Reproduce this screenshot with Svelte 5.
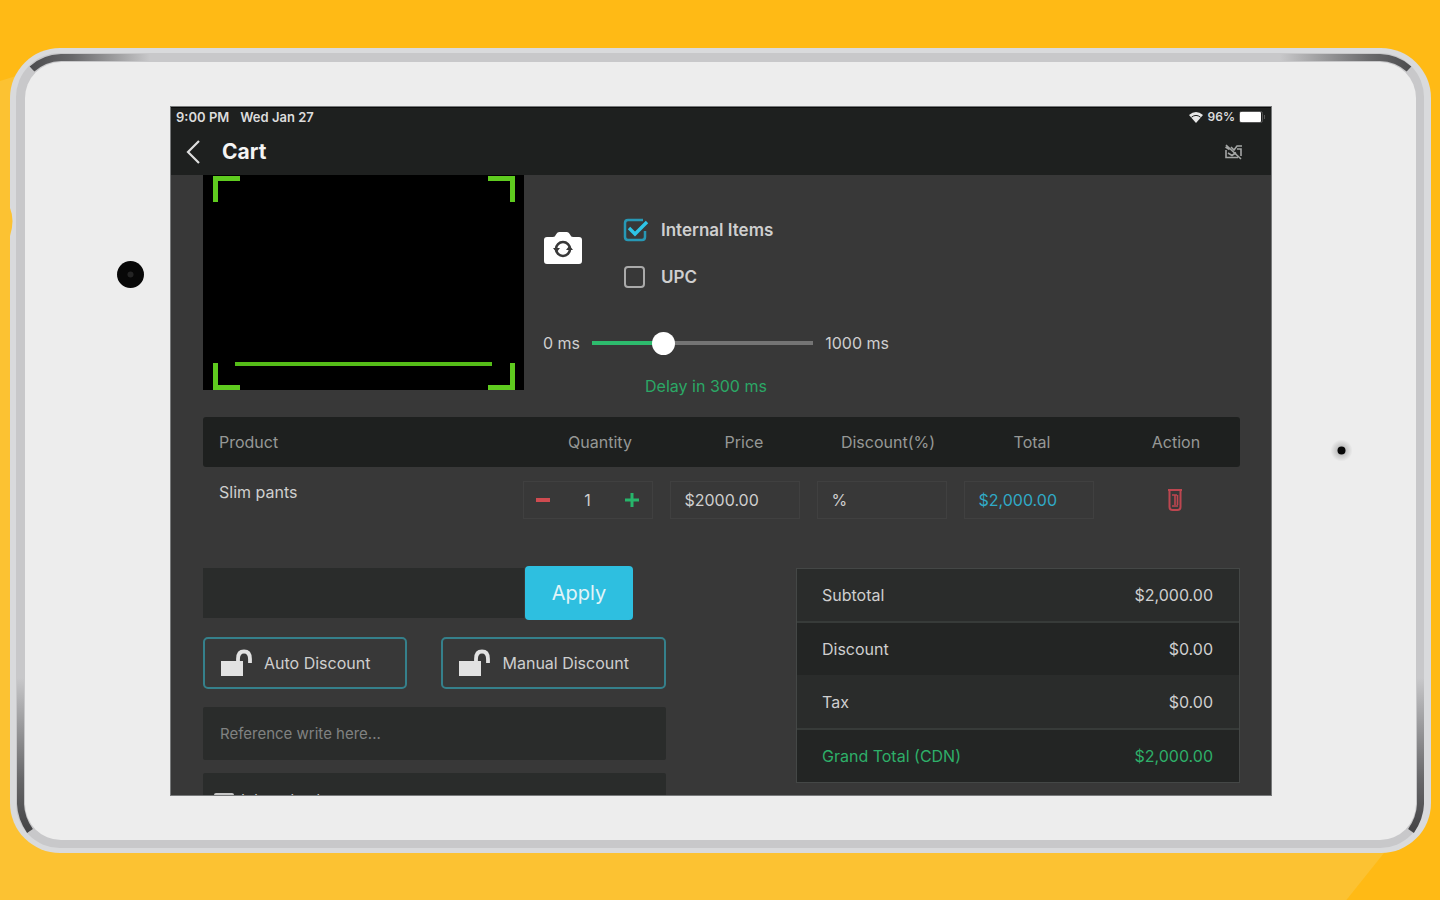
<script>
  let internalItems = $state(true);
  let upc = $state(false);
  let delay = $state(300);
  let quantity = $state(1);
  let price = $state('$2000.00');
  let discount = $state('%');
  let coupon = $state('');
  let reference = $state('');
  const totals = [
    { label: 'Subtotal', value: '$2,000.00' },
    { label: 'Discount', value: '$0.00' },
    { label: 'Tax', value: '$0.00' },
    { label: 'Grand Total (CDN)', value: '$2,000.00' }
  ];
  const headings = ['Product', 'Quantity', 'Price', 'Discount(%)', 'Total', 'Action'];
</script>

{#snippet unlock()}
  <svg class="unlock" viewBox="0 0 32 28" aria-hidden="true">
    <path d="M1 12h22v15H1z" fill="#e2e2e2" />
    <path d="M18 14V10q0-7.500 6-7.500t6 7.500v4" fill="none" stroke="#e2e2e2" stroke-width="3.800" />
  </svg>
{/snippet}

<div class="stage">
  <div class="tablet">
    <svg class="shell" viewBox="0 0 1421 805" preserveAspectRatio="none" aria-hidden="true">
      <defs>
        <linearGradient id="tl" gradientUnits="userSpaceOnUse" x1="20" y1="0" x2="140" y2="0">
          <stop offset="0" stop-color="#4c4c4e" /><stop offset="0.35" stop-color="#68686a" /><stop offset="1" stop-color="#c8c8ca" />
        </linearGradient>
        <linearGradient id="tr" gradientUnits="userSpaceOnUse" x1="1401" y1="0" x2="1270" y2="0">
          <stop offset="0" stop-color="#4c4c4e" /><stop offset="0.3" stop-color="#68686a" /><stop offset="1" stop-color="#c8c8ca" />
        </linearGradient>
        <linearGradient id="down" gradientUnits="userSpaceOnUse" x1="0" y1="784" x2="0" y2="630">
          <stop offset="0" stop-color="#444446" /><stop offset="0.35" stop-color="#68686a" /><stop offset="1" stop-color="#c8c8ca" />
        </linearGradient>
        <radialGradient id="halo"><stop offset="0.3" stop-color="#bdbdbd" /><stop offset="1" stop-color="#ededed" /></radialGradient>
      </defs>
      <rect width="1421" height="805" rx="50" fill="#d9dadc" />
      <rect x="6" y="5" width="1408" height="795" rx="44" fill="#c8c8ca" />
      <rect x="15" y="14" width="1391" height="778" rx="36" fill="#ededed" />
      <path d="M0 160q5 12 0 28z" fill="#fcc232" />
      <g fill="none" stroke-width="7">
        <path d="M22 21Q34 10 51 9.500H180" stroke="url(#tl)" />
        <path d="M1399 21Q1387 10 1370 9.500H1250" stroke="url(#tr)" />
        <path d="M20 783Q11 770 10.500 756V620" stroke="url(#down)" />
        <path d="M1401 783Q1410 770 1410.500 756V620" stroke="url(#down)" />
      </g>
      <circle cx="120.500" cy="226.500" r="13.500" fill="#080808" />
      <circle cx="120.500" cy="226.500" r="3" fill="#242424" />
      <circle cx="1331.500" cy="402.500" r="11" fill="url(#halo)" />
      <circle cx="1331.500" cy="402.500" r="4" fill="#080808" />
    </svg>

    <div class="screen">
      <header>
        <div class="status">
          <span>9:00 PM</span><span>Wed Jan 27</span>
          <span class="power">
            <svg width="16" height="12" viewBox="0 0 16 12" aria-hidden="true">
              <path d="M1 4Q8-2 15 4L8 12Z" fill="#e8e8e8" /><path d="M3.500 6.200Q8 2.600 12.500 6.200" fill="none" stroke="#1e201f" />
            </svg>
            <span>96%</span>
            <svg width="27" height="12" viewBox="0 0 27 12" aria-hidden="true">
              <rect x="0.500" y="0.500" width="23" height="11" rx="2" fill="none" stroke="#555" /><rect x="1" y="1" width="21" height="10" rx="1" fill="#fff" /><path d="M25.500 4v4" stroke="#555" />
            </svg>
          </span>
        </div>
        <div class="nav">
          <button class="icon" aria-label="Back">
            <svg width="16" height="26" viewBox="0 0 16 26"><path d="M13 2L2 13L13 24" fill="none" stroke="#dedede" stroke-width="2.200" /></svg>
          </button>
          <h1>Cart</h1>
          <button class="icon scan" aria-label="Toggle scanner">
            <svg width="20" height="18" viewBox="0 0 20 18" fill="none" stroke="#a4a6a5" stroke-width="1.600">
              <path d="M2 2l15 14M2 7v7.500h12M4 10l4 2.500 4-3M7 4l3 3 3-4h5M13 6h4v7M1.500 4l4 2.500" />
            </svg>
          </button>
        </div>
      </header>

      <main>
        <section class="capture">
          <svg class="viewfinder" viewBox="0 0 321 215" aria-hidden="true">
            <rect width="321" height="215" fill="#000" />
            <path d="M12.500 27V3.500H37M285 3.500h24.500V27M12.500 188v24.500H37M285 212.500h24.500V188" fill="none" stroke="#5fcb1f" stroke-width="5" />
            <path d="M32 189h257" stroke="#55bd18" stroke-width="4" />
          </svg>
          <div class="options">
            <div class="modes">
              <button class="icon" aria-label="Switch camera">
                <svg width="40" height="34" viewBox="0 0 40 34">
                  <path d="M4 6h6q2 0 3-2.500Q14 1 16 1h8q2 0 3 2.500Q28 6 30 6h6q3 0 3 3v21q0 3-3 3H4q-3 0-3-3V9q0-3 3-3z" fill="#fff" />
                  <circle cx="20" cy="18" r="7" fill="none" stroke="#383838" stroke-width="2.600" />
                  <path d="M10 17h7l-3.500 4.500zM23 19h7l-3.500-4.500z" fill="#383838" />
                </svg>
              </button>
              <div class="checks">
                <label><input type="checkbox" bind:checked={internalItems} />
                  <svg width="26" height="24" viewBox="0 0 26 24" aria-hidden="true">
                    {#if internalItems}
                      <path d="M22 13v6q0 3-3 3H5q-3 0-3-3V5q0-3 3-3h15" fill="none" stroke="#2798b5" stroke-width="2.500" /><path d="M6 10l6 6L24 4" fill="none" stroke="#2ec4e6" stroke-width="3.400" />
                    {:else}<rect x="2" y="2" width="20" height="20" rx="3" fill="none" stroke="#aaa" stroke-width="2" />{/if}
                  </svg>Internal Items</label>
                <label><input type="checkbox" bind:checked={upc} />
                  <svg width="26" height="24" viewBox="0 0 26 24" aria-hidden="true">
                    <rect x="2" y="2" width="19" height="20" rx="3" fill="none" stroke="#aaa" stroke-width="2" />
                    {#if upc}<path d="M6 10l6 6L24 4" fill="none" stroke="#2ec4e6" stroke-width="3.400" />{/if}
                  </svg>UPC</label>
              </div>
            </div>
            <div class="range">
              <label for="delay">0 ms</label>
              <input id="delay" type="range" min="0" max="1000" bind:value={delay} style:--fill="{delay / 10}%" />
              <span>1000 ms</span>
            </div>
            <output for="delay">Delay in {delay} ms</output>
          </div>
        </section>

        <table>
          <thead><tr>{#each headings as h}<th scope="col">{h}</th>{/each}</tr></thead>
          <tbody>
            <tr>
              <td>Slim pants</td>
              <td><div class="box stepper">
                <button class="icon" aria-label="Decrease" onclick={() => (quantity = Math.max(1, quantity - 1))}><svg width="14" height="14" viewBox="0 0 14 14"><path d="M0 7h14" stroke="#cf4b50" stroke-width="4" /></svg></button>
                <span>{quantity}</span>
                <button class="icon" aria-label="Increase" onclick={() => (quantity += 1)}><svg width="14" height="14" viewBox="0 0 14 14"><path d="M0 7h14M7 0v14" stroke="#27b56b" stroke-width="3" /></svg></button>
              </div></td>
              <td><input class="box" aria-label="Price" bind:value={price} /></td>
              <td><input class="box" aria-label="Discount" bind:value={discount} /></td>
              <td><div class="box total">$2,000.00</div></td>
              <td><button class="icon" aria-label="Remove item">
                <svg width="16" height="24" viewBox="0 0 16 24" fill="none" stroke="#bd4650" stroke-width="2"><path d="M1 2h14M2.500 3v16q0 3 3 3h5q3 0 3-3V3" /><path d="M5 7h5M8 7v10M5 18h6M10.500 7v10" stroke-width="1.600" /></svg>
              </button></td>
            </tr>
          </tbody>
        </table>

        <section class="checkout">
          <div class="adjust">
            <div class="coupon"><input aria-label="Coupon code" bind:value={coupon} /><button>Apply</button></div>
            <div class="discounts">
              <button>{@render unlock()}Auto Discount</button>
              <button>{@render unlock()}Manual Discount</button>
            </div>
            <input class="field" aria-label="Reference" placeholder="Reference write here..." bind:value={reference} />
            <button class="field note"><svg width="20" height="14" viewBox="0 0 20 14" aria-hidden="true"><rect width="20" height="14" rx="2" fill="#c8c8c8" /></svg>Internal note</button>
          </div>
          <dl>
            {#each totals as t}<div><dt>{t.label}</dt><dd>{t.value}</dd></div>{/each}
          </dl>
        </section>
      </main>
    </div>
  </div>
</div>

<style>
  :global(body) { margin: 0; background: #ffba15; }
  * { box-sizing: border-box; }
  button, input { font: inherit; color: inherit; margin: 0; }
  button { cursor: pointer; }
  svg { display: block; flex: none; }
  .icon { display: flex; padding: 0; border: 0; background: none; }
  .stage { position: relative; display: flex; height: 100vh; min-height: 640px; padding: 48px 9px 47px 10px; font: 400 16px/24px Inter, "Liberation Sans", sans-serif; }
  .stage::before { content: ""; position: absolute; inset: 0; background: #fcc232; clip-path: polygon(0 9%, 4% 7%, 97% 93%, 93.5% 100%, 0 100%); }
  .tablet { position: relative; flex: 1; display: flex; padding: 58px 159px 57px 160px; min-width: 0; }
  .shell { position: absolute; inset: 0; width: 100%; height: 100%; }
  .screen { position: relative; flex: 1; min-width: 0; display: flex; flex-direction: column; overflow: hidden; background: #383838; color: #cfcfcf; outline: 1px solid #77797a; outline-offset: -1px; }
  header { flex: none; height: 69px; padding: 0 6px; background: #1e201f; border-top: 2px solid #0b0c0c; }
  .status { display: flex; align-items: center; gap: 11px; height: 18px; font-size: 13px; font-weight: 600; line-height: 18px; color: #dcdcdc; }
  .power { display: flex; align-items: center; gap: 4px; margin-left: auto; font-size: 12px; }
  .nav { display: flex; align-items: center; gap: 20px; height: 52px; padding: 0 22px 0 10px; }
  h1 { margin: 0; font-size: 21px; font-weight: 700; line-height: 28px; color: #f4f4f4; }
  .scan { margin-left: auto; }
  main { flex: 1; min-height: 0; padding: 0 32px 0 33px; overflow: hidden; }
  .capture { display: flex; align-items: flex-start; gap: 19px; }
  .viewfinder { width: 321px; height: 215px; }
  .options { display: flex; flex-direction: column; width: 346px; padding-top: 43px; }
  .modes { display: flex; align-items: center; gap: 40px; }
  .modes .icon { padding-bottom: 12px; }
  .checks { display: flex; flex-direction: column; gap: 23px; }
  .checks label { display: flex; align-items: center; gap: 12px; font-size: 17px; font-weight: 600; }
  .checks input { position: absolute; opacity: 0; }
  .range { display: flex; align-items: center; gap: 12px; margin-top: 42px; white-space: nowrap; }
  .range input { appearance: none; flex: 1; min-width: 0; height: 24px; background: linear-gradient(90deg, #2dbb6d var(--fill), #747474 var(--fill)) center / 100% 4px no-repeat; }
  .range input::-webkit-slider-thumb { appearance: none; width: 23px; height: 23px; border-radius: 50%; background: #fff; }
  output { align-self: center; margin-top: 19px; padding-right: 20px; color: #2ba866; }
  table { display: block; margin-top: 19px; }
  thead, tbody { display: block; }
  tr { display: grid; align-items: center; }
  thead tr { grid-template-columns: 325fr repeat(4, 144fr) 136fr; height: 50px; background: #1e201f; border-radius: 3px; color: #969896; }
  tbody tr { grid-template-columns: 311fr repeat(4, 147fr) 138fr; height: 66px; }
  th, td { padding: 0; font-weight: 400; text-align: center; min-width: 0; }
  th:first-child, td:first-child { padding-left: 16px; text-align: left; }
  td:first-child { padding-bottom: 16px; }
  th:last-child, td:last-child { padding-left: 8px; }
  td { display: flex; justify-content: center; }
  td:first-child { justify-content: flex-start; }
  .box { width: 130px; height: 38px; padding: 0 14px; border: 1px solid #404040; background: none; line-height: 36px; text-align: left; }
  .stepper { display: flex; align-items: center; justify-content: space-between; padding: 0 12px; }
  .total { color: #30aac6; }
  .checkout { display: flex; justify-content: space-between; align-items: flex-start; margin-top: 33px; }
  .adjust { width: 463px; }
  .coupon { display: flex; align-items: center; gap: 1px; padding-right: 33px; }
  .coupon input { flex: 1; min-width: 0; height: 50px; padding: 0 16px; border: 0; background: #2a2c2b; }
  .coupon button { width: 108px; height: 54px; border: 0; border-radius: 4px; background: #2ebfe0; color: #e2f4f8; font-size: 20px; }
  .discounts { display: flex; gap: 34px; margin-top: 17px; }
  .discounts button { flex: 1 1 auto; display: flex; align-items: center; gap: 12px; height: 52px; padding: 0 30px 0 15px; border: 2px solid #35808b; border-radius: 5px; background: none; white-space: nowrap; }
  .unlock { width: 32px; height: 28px; }
  .field { display: block; width: 100%; height: 53px; margin-top: 18px; padding: 0 17px; border: 0; border-radius: 2px; background: #2a2c2b; font-size: 15px; }
  .field::placeholder { color: #808281; opacity: 1; }
  .note { display: flex; align-items: center; gap: 7px; margin-top: 13px; padding: 0 11px; }
  dl { width: 444px; margin: 2px 0 0; border: 1px solid #444746; }
  dl div { display: flex; align-items: center; justify-content: space-between; height: 53px; padding: 0 26px 0 25px; background: #2a2c2b; }
  dl div:nth-child(even) { height: 54px; background: #232524; border-top: 2px solid #373b39; }
  dl div:nth-child(1) { height: 52px; }
  dl div:last-child { color: #2eaf69; }
  dd { margin: 0; }
</style>
